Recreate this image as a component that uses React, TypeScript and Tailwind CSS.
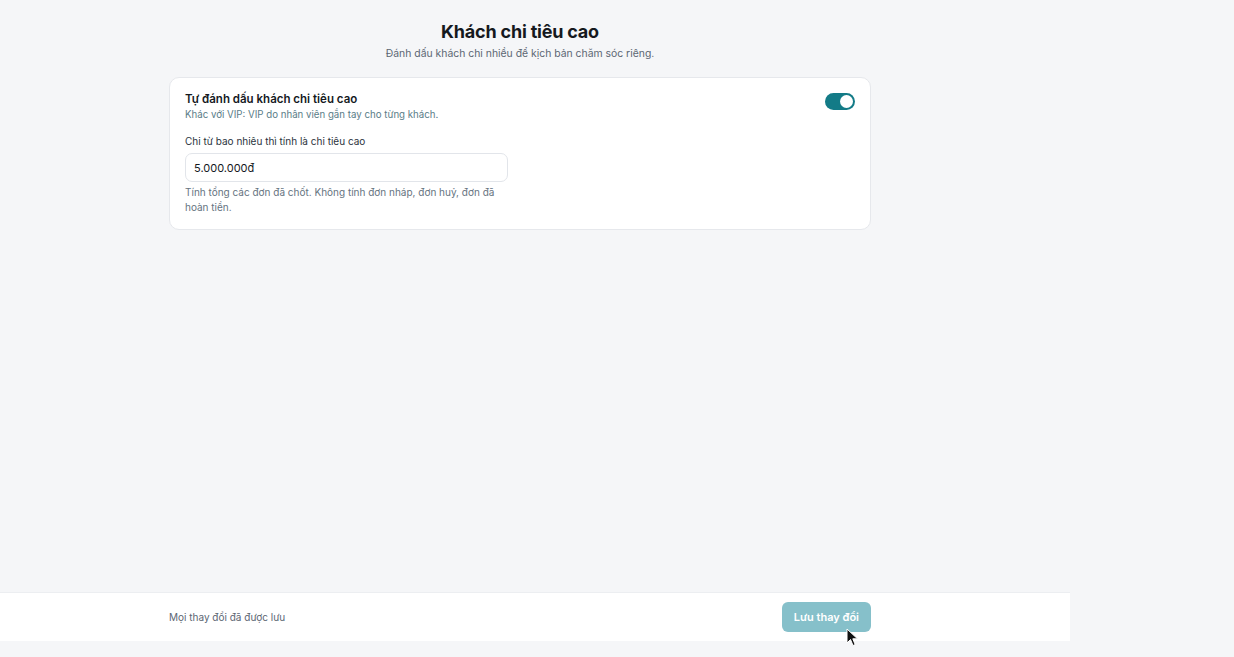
import { useState } from "react";

const font = { fontFamily: "Inter, 'Noto Sans', sans-serif" };

function Toggle({ on, onChange }: { on: boolean; onChange: () => void }) {
  return (
    <button
      type="button"
      onClick={onChange}
      className={`relative inline-flex h-[17px] w-[30px] shrink-0 items-center rounded-full transition-colors ${
        on ? "bg-[#137b87]" : "bg-gray-300"
      }`}
    >
      <span
        className={`inline-block h-[13px] w-[13px] rounded-full bg-white transition-transform ${
          on ? "translate-x-[15px]" : "translate-x-[2px]"
        }`}
      />
    </button>
  );
}

export default function App() {
  const [enabled, setEnabled] = useState(true);
  const [amount, setAmount] = useState("5.000.000đ");

  return (
    <div style={font} className="flex min-h-[657px] w-full flex-col bg-[#f5f6f8] text-[#1b1f24]">
      <div className="flex w-[1070px] flex-1 flex-col">
        <main className="ml-[169px] flex w-[702px] flex-1 flex-col pt-[21px]">
          <div className="flex flex-col items-center">
            <h1 className="text-[18px] font-bold leading-[22px] tracking-[-0.2px] text-[#15191e]">
              Khách chi tiêu cao
            </h1>
            <p className="mt-[4px] text-[10.4px] leading-[14px] text-[#5c6673]">
              Đánh dấu khách chi nhiều để kịch bản chăm sóc riêng.
            </p>
          </div>

          <section className="mt-[16px] rounded-[10px] border border-[#e6e8ec] bg-white px-[15px] pt-[13px] pb-[14px]">
            <div className="flex items-start justify-between">
              <div className="flex flex-col">
                <h2 className="text-[11.5px] font-semibold leading-[16px] text-[#15191e]">
                  Tự đánh dấu khách chi tiêu cao
                </h2>
                <p className="mt-[1px] text-[9.7px] leading-[13px] text-[#5a7d88]">
                  Khác với VIP: VIP do nhân viên gắn tay cho từng khách.
                </p>
              </div>
              <div className="-mt-[1px]">
                <Toggle on={enabled} onChange={() => setEnabled(!enabled)} />
              </div>
            </div>

            <label className="mt-[13px] block text-[10px] leading-[14px] text-[#2c3440]">
              Chi từ bao nhiêu thì tính là chi tiêu cao
            </label>
            <input
              value={amount}
              onChange={(e) => setAmount(e.target.value)}
              className="mt-[5px] h-[29px] w-[323px] rounded-[7px] border border-[#e2e5ea] bg-white px-[8px] text-[11px] text-[#15191e] outline-none"
            />
            <p className="mt-[3px] w-[323px] text-[10px] leading-[15px] text-[#66747f]">
              Tính tổng các đơn đã chốt. Không tính đơn nháp, đơn huỷ, đơn đã hoàn tiền.
            </p>
          </section>
        </main>

        <footer className="mb-[16px] border-t border-[#eceef1] bg-white">
          <div className="ml-[169px] flex h-[48px] w-[702px] items-center justify-between">
            <span className="text-[10px] text-[#5c6673]">Mọi thay đổi đã được lưu</span>
            <div className="relative">
              <button
                type="button"
                disabled
                className="h-[30px] rounded-[6px] bg-[#86c0ca] px-[12px] text-[11px] font-semibold text-white"
              >
                Lưu thay đổi
              </button>
              <svg
                className="absolute left-[64px] top-[26px]"
                width="14"
                height="20"
                viewBox="0 0 14 20"
              >
                <path d="M1 1 L1 15 L4.5 11.5 L7 17.5 L9.2 16.6 L6.8 10.8 L11.5 10.8 Z" fill="#111" stroke="#fff" strokeWidth="1" />
              </svg>
            </div>
          </div>
        </footer>
      </div>
    </div>
  );
}
